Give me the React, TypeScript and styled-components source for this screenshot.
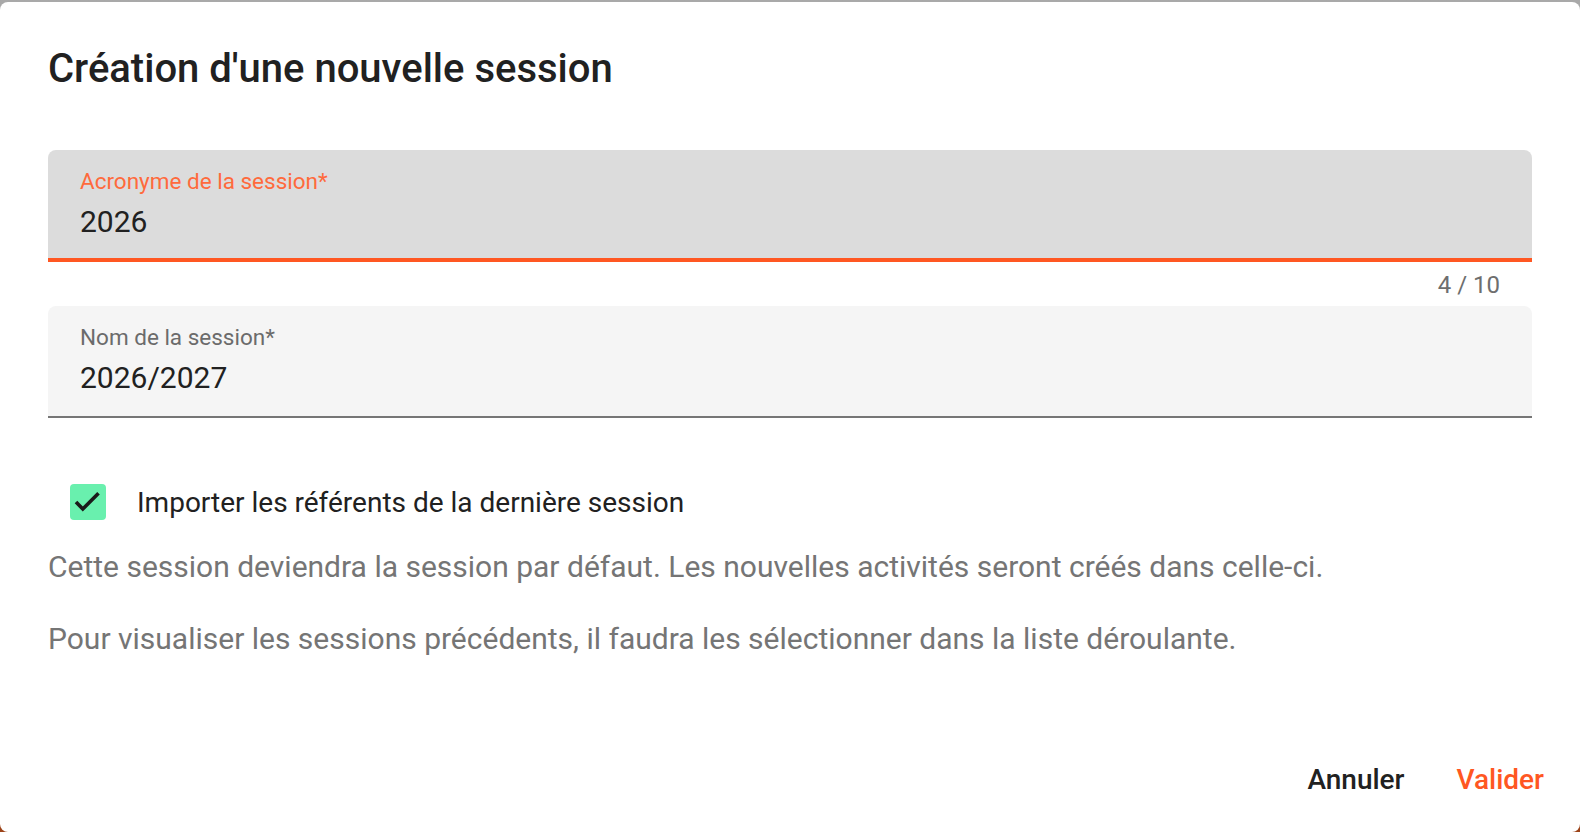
import React from 'react';
import styled, { createGlobalStyle } from 'styled-components';

const Global = createGlobalStyle`
  html, body { margin: 0; padding: 0; }
  body {
    background: linear-gradient(#a9a9a9 0%, #8f8f8f 55%, #9c4318 100%);
    font-family: Roboto, "Noto Sans", "Liberation Sans", sans-serif;
    overflow: hidden;
  }
`;

const Dialog = styled.div`
  margin-top: 2px;
  height: 830px;
  background: #ffffff;
  border-radius: 8px;
  display: flex;
  flex-direction: column;
  box-sizing: border-box;
`;

const Title = styled.h2`
  margin: 0;
  padding: 35px 48px 0;
  font-size: 40px;
  line-height: 64px;
  font-weight: 500;
  color: #212121;
`;

const Content = styled.div`
  padding: 49px 48px 0;
  display: flex;
  flex-direction: column;
`;

const Field = styled.div<{ $focused?: boolean }>`
  height: 112px;
  box-sizing: border-box;
  padding: 13.8px 32px 0;
  border-radius: 8px 8px 0 0;
  background: ${(p) => (p.$focused ? '#dcdcdc' : '#f5f5f5')};
  border-bottom: ${(p) => (p.$focused ? '4px solid #ff5722' : '2px solid #767676')};
  display: flex;
  flex-direction: column;
`;

const Label = styled.label<{ $focused?: boolean }>`
  font-size: 22.5px;
  line-height: 34.5px;
  color: ${(p) => (p.$focused ? '#ff6a3c' : '#6b6b6b')};
`;

const Value = styled.div`
  margin-top: 0.5px;
  font-size: 30px;
  line-height: 46px;
  color: #212121;
`;

const Helper = styled.div`
  margin-top: 3px;
  height: 40px;
  font-size: 24px;
  line-height: 40px;
  color: #6e6e6e;
  text-align: right;
  padding-right: 32px;
  margin-bottom: 1px;
`;

const CheckRow = styled.div`
  margin-top: 66px;
  padding-left: 22px;
  height: 36px;
  display: flex;
  align-items: center;
`;

const Box = styled.span`
  width: 36px;
  height: 36px;
  border-radius: 4px;
  background: #69f0ae;
  display: flex;
  flex: none;
`;

const CheckLabel = styled.span`
  margin-left: 31px;
  font-size: 28px;
  color: #212121;
`;

const Para = styled.p<{ $gap: number }>`
  margin: ${(p) => p.$gap}px 0 0;
  font-size: 30px;
  line-height: 45px;
  color: #757575;
`;

const Actions = styled.div`
  margin-top: auto;
  padding: 0 20px 32px 0;
  display: flex;
  justify-content: flex-end;
  gap: 20px;
`;

const Button = styled.button<{ $primary?: boolean }>`
  border: none;
  background: transparent;
  padding: 0 16px;
  font-family: inherit;
  font-size: 28px;
  line-height: 40px;
  font-weight: 500;
  color: ${(p) => (p.$primary ? '#ff5722' : '#212121')};
  cursor: pointer;
`;

export default function App() {
  return (
    <>
      <Global />
      <Dialog>
        <Title>Création d'une nouvelle session</Title>
        <Content>
          <Field $focused>
            <Label $focused>Acronyme de la session*</Label>
            <Value>2026</Value>
          </Field>
          <Helper>4 / 10</Helper>
          <Field>
            <Label>Nom de la session*</Label>
            <Value>2026/2027</Value>
          </Field>
          <CheckRow>
            <Box>
              <svg width="36" height="36" viewBox="0 0 36 36">
                <polyline
                  points="6,18 12.8,25 28.5,9.2"
                  fill="none"
                  stroke="#1a1a1a"
                  strokeWidth="3.6"
                />
              </svg>
            </Box>
            <CheckLabel>Importer les référents de la dernière session</CheckLabel>
          </CheckRow>
          <Para $gap={23.6}>
            Cette session deviendra la session par défaut. Les nouvelles activités seront créés dans celle-ci.
          </Para>
          <Para $gap={27}>
            Pour visualiser les sessions précédents, il faudra les sélectionner dans la liste déroulante.
          </Para>
        </Content>
        <Actions>
          <Button>Annuler</Button>
          <Button $primary>Valider</Button>
        </Actions>
      </Dialog>
    </>
  );
}
